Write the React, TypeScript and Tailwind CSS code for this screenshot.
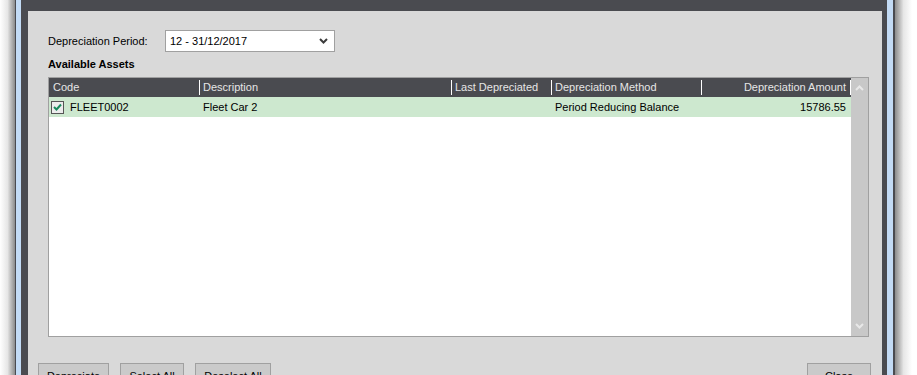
import React from 'react';

const font = { fontFamily: '"Liberation Sans", Arial, sans-serif' };

const Chevron = ({ up, color, w = 9 }: { up?: boolean; color: string; w?: number }) => (
  <svg width={w} height={6} viewBox="0 0 9 6">
    <path
      d={up ? 'M1 5 L4.5 1.5 L8 5' : 'M1 1 L4.5 4.5 L8 1'}
      fill="none"
      stroke={color}
      strokeWidth={2}
    />
  </svg>
);

const HeaderCell = ({
  label,
  width,
  right,
  first,
}: {
  label: string;
  width: string;
  right?: boolean;
  first?: boolean;
}) => (
  <div className={`${width} flex items-center h-full shrink-0`}>
    <span
      className={`flex-1 truncate ${first ? 'pl-[4px]' : 'pl-[3px]'} ${right ? 'text-right pr-[4px]' : ''}`}
    >
      {label}
    </span>
    <span className="w-px h-[15px] bg-white shrink-0" />
  </div>
);

const Button = ({ label, width }: { label: string; width: string }) => (
  <div
    className={`${width} h-[27px] shrink-0 border border-[#a0a0a0] bg-[#cacaca] flex items-center justify-center text-[11px] text-black`}
  >
    {label}
  </div>
);

export default function App() {
  return (
    <div className="w-[917px] h-[375px] overflow-hidden bg-white flex" style={font}>
      {/* left drop shadow */}
      <div className="w-[15px] h-full bg-gradient-to-r from-white via-[#e6e6e6] to-[#8c8c8c] shrink-0" />
      <div className="w-px h-full bg-[#4a4b50] shrink-0" />
      <div className="w-[5px] h-full bg-[#c3dbf5] shrink-0" />

      {/* window frame */}
      <div className="w-[866px] h-full bg-[#4a4b50] pt-[11px] pl-[7px] pr-[5px] shrink-0 flex">
        <div className="flex-1 bg-[#d9d9d9] flex flex-col">
          <div className="pl-[20px] pr-[13px] pt-[19px] flex flex-col">
            {/* period */}
            <div className="flex items-center h-[22px] text-[11px] text-black">
              <span className="w-[117px]">Depreciation Period:</span>
              <div className="w-[170px] h-[22px] bg-white border border-[#a0a0a0] flex items-center justify-between pl-[4px] pr-[6px]">
                <span>12 - 31/12/2017</span>
                <Chevron color="#3c3c3c" />
              </div>
            </div>

            <div className="h-[25px] leading-[25px] text-[11px] font-bold text-black">Available Assets</div>

            {/* assets grid */}
            <div className="h-[260px] border border-[#a0a0a0] bg-white flex text-[11px]">
              <div className="flex-1 flex flex-col">
                <div className="h-[19px] bg-[#4a4b50] text-[#e6e6e6] flex items-center">
                  <HeaderCell label="Code" width="w-[151px]" first />
                  <HeaderCell label="Description" width="w-[252px]" />
                  <HeaderCell label="Last Depreciated" width="w-[100px]" />
                  <HeaderCell label="Depreciation Method" width="w-[150px]" />
                  <HeaderCell label="Depreciation Amount" width="w-[149px]" right />
                </div>
                <div className="h-[20px] bg-[#cde8cf] text-black flex items-center">
                  <div className="w-[151px] shrink-0 flex items-center pl-[2px] gap-[6px]">
                    <div className="w-[13px] h-[13px] border border-[#555] bg-[#ececec] flex items-center justify-center">
                      <svg width="9" height="8" viewBox="0 0 9 8">
                        <path d="M1 4 L3.5 6.5 L8 1.5" fill="none" stroke="#178a5c" strokeWidth={2} />
                      </svg>
                    </div>
                    <span>FLEET0002</span>
                  </div>
                  <div className="w-[252px] shrink-0 pl-[3px]">Fleet Car 2</div>
                  <div className="w-[100px] shrink-0 pl-[3px]" />
                  <div className="w-[150px] shrink-0 pl-[3px]">Period Reducing Balance</div>
                  <div className="w-[149px] shrink-0 text-right pr-[5px]">15786.55</div>
                </div>
              </div>
              <div className="w-[17px] bg-[#c8c8c8] flex flex-col items-center justify-between py-[7px]">
                <Chevron up color="#e8e8e8" />
                <Chevron color="#e8e8e8" />
              </div>
            </div>
          </div>

          <div className="mt-[14px] h-px bg-[#a0a0a0]" />

          {/* buttons */}
          <div className="mt-[12px] pl-[10px] pr-[11px] flex gap-[11px]">
            <Button label="Depreciate" width="w-[71px]" />
            <Button label="Select All" width="w-[64px]" />
            <Button label="Deselect All" width="w-[76px]" />
            <div className="flex-1" />
            <Button label="Close" width="w-[64px]" />
          </div>
        </div>
      </div>

      <div className="w-[6px] h-full bg-[#c3dbf5] shrink-0" />
      <div className="w-[2px] h-full bg-[#4a4b50] shrink-0" />
      {/* right drop shadow */}
      <div className="w-[17px] h-full bg-gradient-to-r from-[#8c8c8c] via-[#e6e6e6] to-white shrink-0" />
    </div>
  );
}
